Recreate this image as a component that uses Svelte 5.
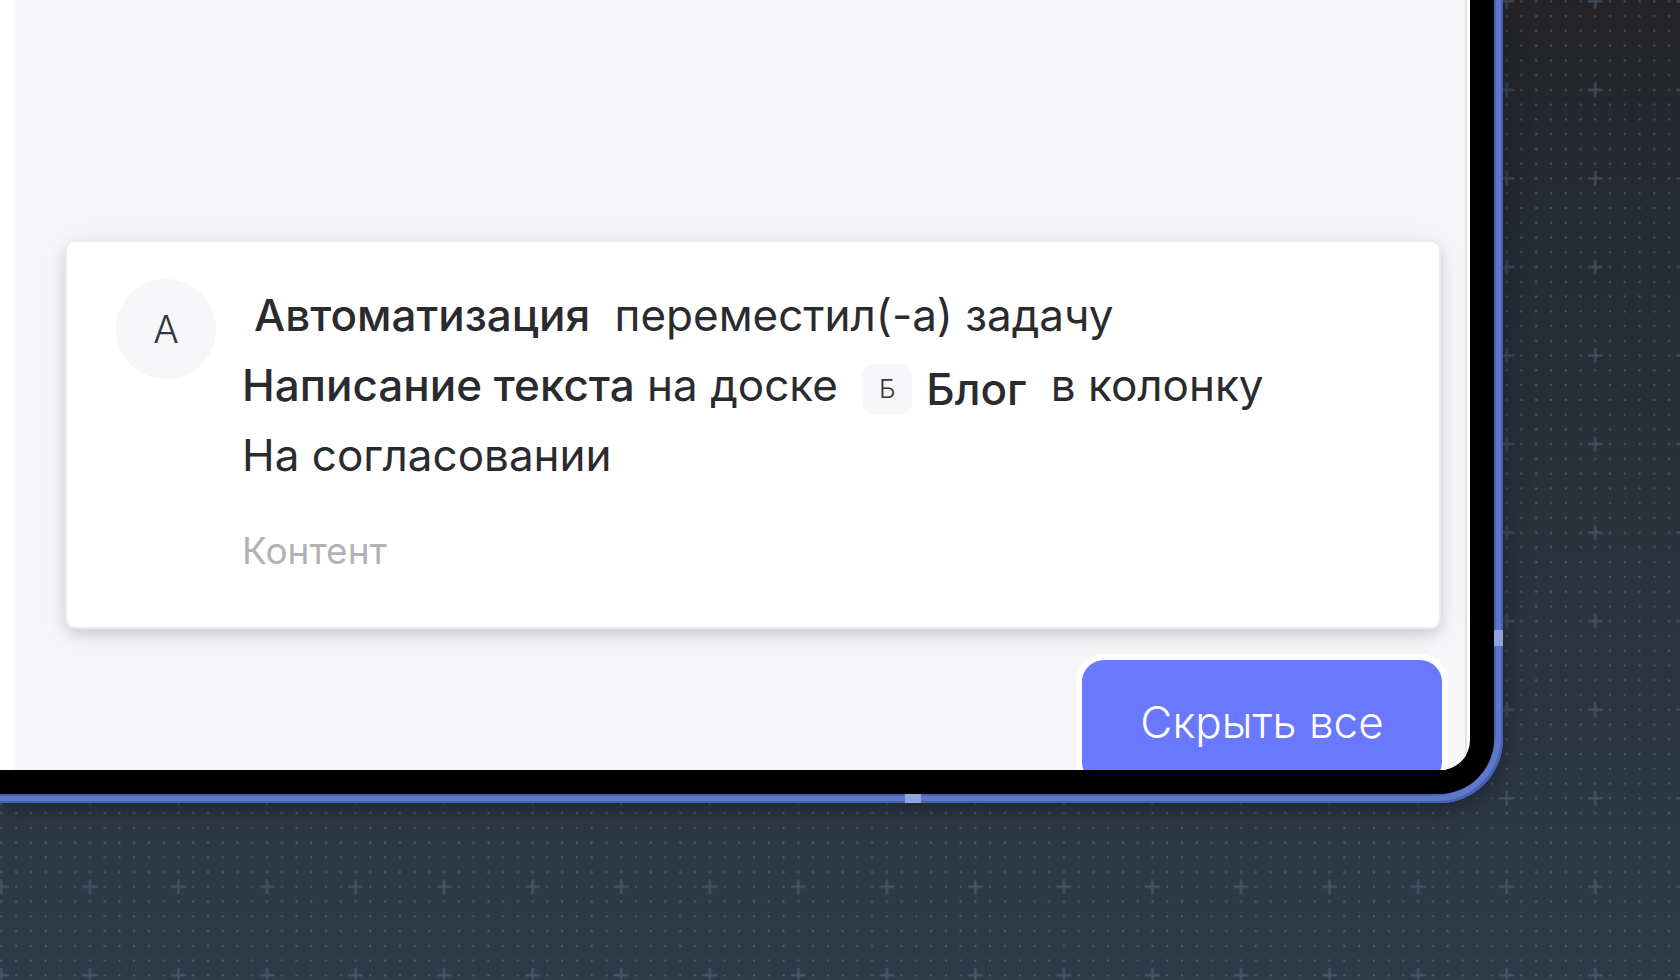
<script lang="ts">
    const notification = {
        author: 'Автоматизация',
        action: 'переместил(-а) задачу',
        task: 'Написание текста',
        board: 'Блог',
        column: 'На согласовании',
        project: 'Контент',
    };

    // dots between the crosses of the background grid, 6 steps per tile
    const dots = Array.from({ length: 36 }, (_, i) => ({ x: i % 6, y: Math.floor(i / 6) })).filter(
        (dot) => dot.x || dot.y
    );

    let hidden = $state(false);
</script>

<main class="scene">
    <svg class="grid" aria-hidden="true">
        <defs>
            <pattern
                id="grid-tile"
                width="6"
                height="6"
                patternUnits="userSpaceOnUse"
                patternTransform="translate(-6 -6) scale(14.758)"
            >
                <path d="M0 .5h1M.5 0v1" class="cross" />
                {#each dots as dot}
                    <rect x={dot.x + 0.43} y={dot.y + 0.43} width="0.14" height="0.14" class="dot" />
                {/each}
            </pattern>
        </defs>
        <rect width="100%" height="100%" fill="url(#grid-tile)" />
    </svg>

    <div class="device">
        <span class="antenna side"></span>
        <span class="antenna bottom"></span>
        <div class="bezel">
            <div class="screen">
                <section class="panel">
                    {#if !hidden}
                        <article class="card">
                            <span class="avatar">{notification.author[0]}</span>
                            <div class="body">
                                <p class="message">
                                    <a href="#author" class="author">{notification.author}</a>
                                    {notification.action}
                                    <a href="#task">{notification.task}</a> на доске
                                    <a href="#board" class="board">
                                        <span class="badge">{notification.board[0]}</span>{notification.board}
                                    </a>
                                    в колонку
                                    <span class="column">{notification.column}</span>
                                </p>
                                <p class="project">{notification.project}</p>
                            </div>
                        </article>
                    {/if}
                    <button type="button" class="hide-all" onclick={() => (hidden = true)}>
                        Скрыть все
                    </button>
                </section>
            </div>
        </div>
    </div>
</main>

<style>
    :global(body) {
        margin: 0;
    }

    .scene {
        position: relative;
        min-height: 100vh;
        box-sizing: border-box;
        padding-right: 177px;
        overflow: hidden;
        background: linear-gradient(180deg, #242427 0%, #262a31 20%, #2a333e 62%, #2e3b4b 100%);
        font-family: Inter, 'Liberation Sans', sans-serif;
        color: #2a2b2f;
    }

    .grid {
        position: absolute;
        inset: 0;
        width: 100%;
        height: 100%;
    }

    .cross {
        stroke: #5b7188;
        stroke-opacity: 0.5;
        stroke-width: 0.15;
    }

    .dot {
        fill: #6b8095;
        fill-opacity: 0.5;
    }

    .device {
        position: relative;
        padding: 0 9px 9px 0;
        border-radius: 0 0 64px 0;
        background: #4662b9;
        box-shadow:
            inset -2px -2px 1px #4560b8,
            inset -7px -7px 1px #5f78ca,
            0 4px 24px rgba(20, 24, 28, 0.6);
    }

    .antenna {
        position: absolute;
        background: #93a3dc;
    }

    .antenna.side {
        right: 0;
        bottom: 157px;
        width: 9px;
        height: 16px;
    }

    .antenna.bottom {
        right: 582px;
        bottom: 0;
        width: 16px;
        height: 9px;
    }

    .bezel {
        padding: 0 24px 24px 0;
        border-radius: 0 0 55px 0;
        background: #000;
    }

    .screen {
        overflow: hidden;
        padding-left: 14px;
        padding-right: 3px;
        border-radius: 0 0 30px 0;
        background: #fff;
    }

    .panel {
        display: flex;
        flex-direction: column;
        align-items: flex-end;
        gap: 31px;
        padding: 240px 24px 0 51px;
        border-right: 2px solid #dfe1e3;
        background: #f7f7fa;
    }

    .card {
        display: flex;
        align-items: flex-start;
        gap: 26px;
        box-sizing: border-box;
        width: 100%;
        padding: 37px 48px 46px 49px;
        border: 2px solid #ebebf5;
        border-radius: 10px;
        background: #fff;
        box-shadow:
            0 6px 14px rgba(0, 0, 0, 0.14),
            0 4px 40px rgba(0, 0, 0, 0.06);
    }

    .avatar {
        flex: none;
        width: 100px;
        border-radius: 50%;
        background: #f7f7fa;
        color: #33363f;
        font-size: 38px;
        font-weight: 300;
        line-height: 100px;
        text-align: center;
    }

    .body {
        padding-top: 1px;
    }

    .message {
        margin: 0;
        font-size: 44px;
        line-height: 70px;
    }

    .message a {
        color: inherit;
        font-weight: 500;
        text-decoration: none;
        white-space: nowrap;
    }

    .message .author {
        display: inline-block;
        margin: 0 12px;
    }

    .message .board {
        display: inline-flex;
        align-items: center;
        gap: 14px;
        height: 50px;
        margin: 0 12px;
        line-height: 50px;
        vertical-align: middle;
    }

    .badge {
        width: 50px;
        border-radius: 12px;
        background: #f7f7fa;
        color: #33363f;
        font-size: 26px;
        font-weight: 300;
        text-align: center;
    }

    .column {
        white-space: nowrap;
    }

    .project {
        margin: 31px 0 0;
        color: #b2b2b2;
        font-size: 37px;
        line-height: 60px;
    }

    .hide-all {
        min-width: 360px;
        margin: 0 -1px -14px 0;
        padding: 32px 24px;
        border: 0;
        border-radius: 22px;
        background: #6978ff;
        box-shadow: 0 0 0 6px #fff;
        color: #fff;
        font-family: inherit;
        font-size: 44px;
        font-weight: 350;
        line-height: 60px;
        cursor: pointer;
    }
</style>
